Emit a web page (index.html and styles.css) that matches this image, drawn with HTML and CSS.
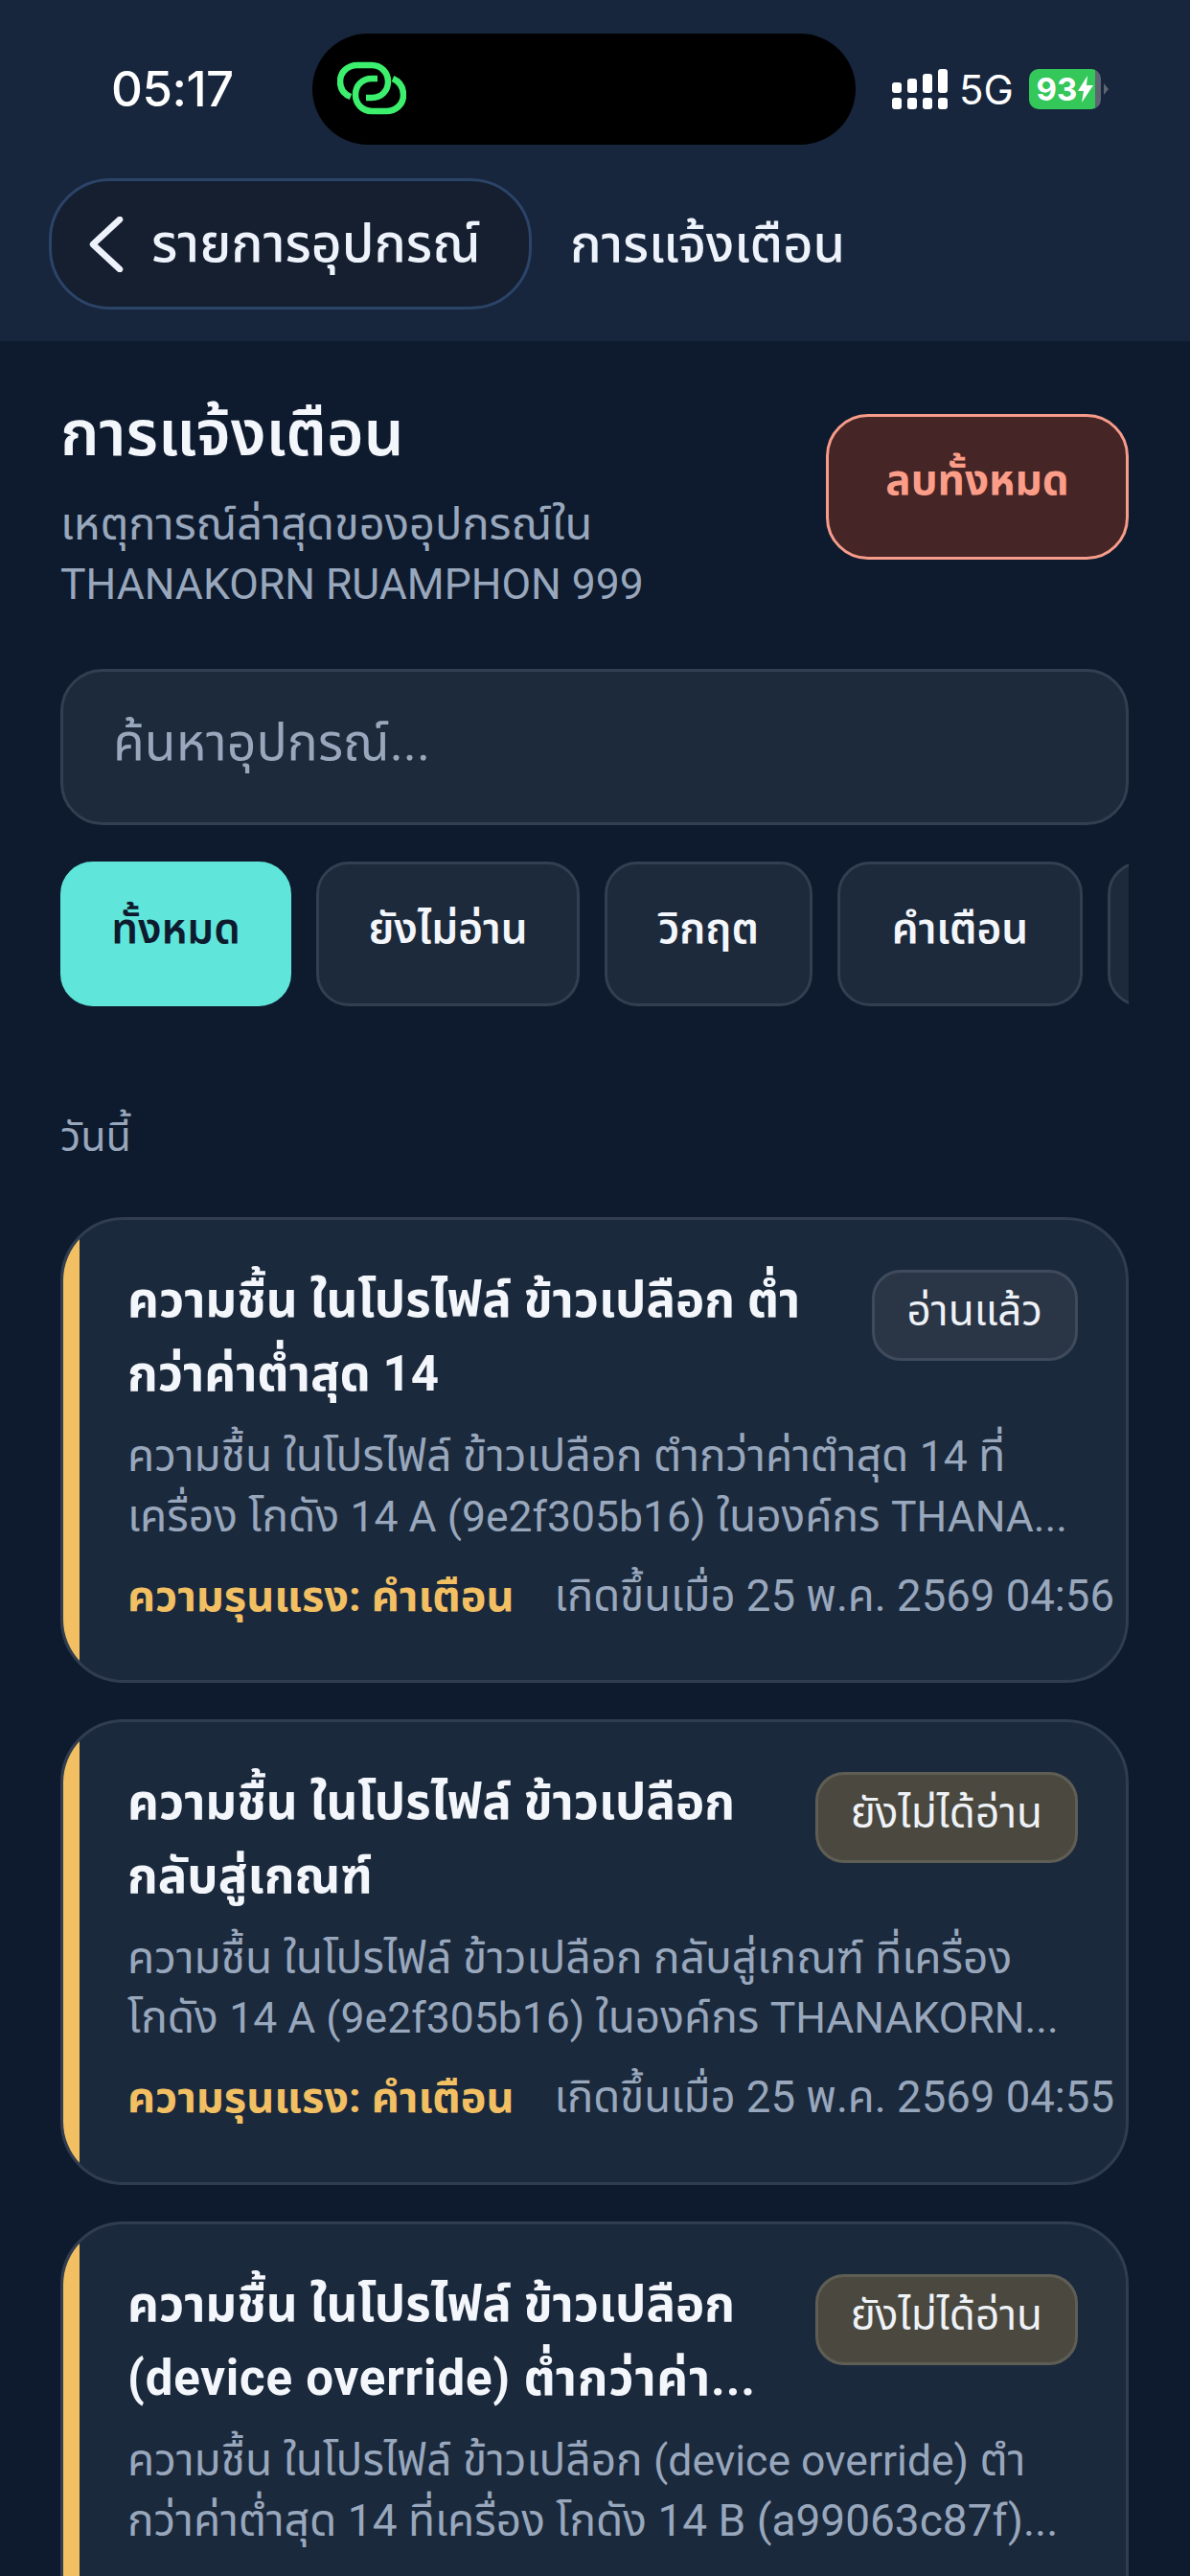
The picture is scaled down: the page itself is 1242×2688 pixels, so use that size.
FILE: index.html
```html
<!DOCTYPE html>
<html lang="th">
<head>
    <meta charset="UTF-8">
    <meta name="viewport" content="width=device-width, initial-scale=1.0">
    <title>การแจ้งเตือน</title>
    <link rel="stylesheet" href="styles.css">
</head>
<body>
<div class="screen">
    <header class="top">
        <div class="status">
            <span class="time">05:17</span>
            <div class="island">
                <svg class="link-icon" width="72" height="58" viewBox="0 0 72 58" fill="none" stroke="#3cf06e" stroke-width="6.5" stroke-linecap="butt">
                    <path d="M14 37C6 34 3 28 3 21C3 11 11 4 21 4H36C46 4 53 12 53 21C53 31 46 38 36 38H30"/>
                    <path d="M58 18C65 21 69 27 69 35C69 45 61 52 51 52H36C26 52 19 44 19 35C19 25 26 18 36 18H42"/>
                </svg>
            </div>
            <div class="indicators">
                <svg width="58" height="42" viewBox="0 0 58 42" fill="#fff">
                    <rect x="0" y="14" width="10" height="11" rx="3"/>
                    <rect x="16" y="10" width="10" height="15" rx="3"/>
                    <rect x="32" y="5" width="10" height="20" rx="3"/>
                    <rect x="48" y="0" width="10" height="25" rx="3"/>
                    <rect x="0" y="30" width="10" height="12" rx="3"/>
                    <rect x="16" y="30" width="10" height="12" rx="3"/>
                    <rect x="32" y="30" width="10" height="12" rx="3"/>
                    <rect x="48" y="30" width="10" height="12" rx="3"/>
                </svg>
                <span class="net">5G</span>
                <div class="battery">
                    <span class="level">93</span>
                    <svg class="bolt" width="16" height="28" viewBox="0 0 16 28" fill="#fff"><path d="M10 0L0 16H6L4 28L16 10H9Z"/></svg>
                </div>
                <span class="battery-tip"></span>
            </div>
        </div>
        <nav class="nav">
            <a class="back">
                <svg width="38" height="58" viewBox="0 0 38 58" fill="none" stroke="#eef3fb" stroke-width="6.5" stroke-linecap="round" stroke-linejoin="round"><path d="M33 3L5 29L33 55"/></svg>
                <span class="nav-text">รายการอุปกรณ์</span>
            </a>
            <span class="nav-text nav-title">การแจ้งเตือน</span>
        </nav>
    </header>

    <main class="content">
        <section class="intro">
            <div>
                <h1>การแจ้งเตือน</h1>
                <p>เหตุการณ์ล่าสุดของอุปกรณ์ใน<br><span class="en">THANAKORN RUAMPHON 999</span></p>
            </div>
            <button class="clear">ลบทั้งหมด</button>
        </section>

        <div class="search">ค้นหาอุปกรณ์...</div>

        <div class="chips">
            <span class="chip active">ทั้งหมด</span>
            <span class="chip">ยังไม่อ่าน</span>
            <span class="chip">วิกฤต</span>
            <span class="chip">คำเตือน</span>
            <span class="chip"></span>
        </div>

        <div class="day">วันนี้</div>

        <article class="card">
            <div class="card-head">
                <h3>ความชื้น ในโปรไฟล์ ข้าวเปลือก ต่ำ<br>กว่าค่าต่ำสุด 14</h3>
                <span class="pill">อ่านแล้ว</span>
            </div>
            <p class="desc">ความชื้น ในโปรไฟล์ ข้าวเปลือก ตำกว่าค่าตำสุด <span class="en">14</span> ที่<br>เครื่อง โกดัง <span class="en">14 A (9e2f305b16)</span> ในองค์กร <span class="en">THANA...</span></p>
            <div class="meta"><b>ความรุนแรง: คำเตือน</b><span>เกิดขึ้นเมื่อ 25 พ.ค. 2569 04:56</span></div>
        </article>

        <article class="card">
            <div class="card-head">
                <h3>ความชื้น ในโปรไฟล์ ข้าวเปลือก<br>กลับสู่เกณฑ์</h3>
                <span class="pill unread">ยังไม่ได้อ่าน</span>
            </div>
            <p class="desc">ความชื้น ในโปรไฟล์ ข้าวเปลือก กลับสู่เกณฑ์ ที่เครื่อง<br>โกดัง <span class="en">14 A (9e2f305b16)</span> ในองค์กร <span class="en">THANAKORN...</span></p>
            <div class="meta"><b>ความรุนแรง: คำเตือน</b><span>เกิดขึ้นเมื่อ 25 พ.ค. 2569 04:55</span></div>
        </article>

        <article class="card">
            <div class="card-head">
                <h3>ความชื้น ในโปรไฟล์ ข้าวเปลือก<br><span class="wide">(device override) ต่ำกว่าค่า...</span></h3>
                <span class="pill unread">ยังไม่ได้อ่าน</span>
            </div>
            <p class="desc">ความชื้น ในโปรไฟล์ ข้าวเปลือก <span class="en">(device override)</span> ตำ<br>กว่าค่าต่ำสุด 14 ที่เครื่อง โกดัง 14 B (a99063c87f)...</p>
        </article>
    </main>
</div>
</body>
</html>
```
FILE: styles.css
```css
* {
    box-sizing: border-box;
}
html, body {
    margin: 0;
    padding: 0;
}
body {
    width: 1242px;
    height: 2688px;
    overflow: hidden;
    background: #0e1b2e;
    font-family: Roboto, "Noto Sans Thai", "Noto Sans", sans-serif;
    color: #f3f6fb;
}
.screen {
    height: 2688px;
    overflow: hidden;
}
.en {
    font-size: 44.5px;
}
.wide {
    letter-spacing: 0.8px;
}
.top {
    height: 356px;
    padding-top: 35px;
    background: #17263d;
}
.status {
    display: flex;
    align-items: center;
    height: 116px;
}
.time {
    width: 326px;
    padding-left: 116px;
    padding-bottom: 2px;
    font-family: Inter, sans-serif;
    font-size: 51px;
    font-weight: 500;
    letter-spacing: -0.5px;
    color: #fff;
}
.island {
    display: flex;
    align-items: center;
    width: 567px;
    height: 116px;
    padding-left: 26px;
    border-radius: 58px;
    background: #000;
}
.indicators {
    display: flex;
    align-items: center;
    padding-left: 38px;
}
.net {
    margin-left: 12px;
    font-family: Inter, sans-serif;
    font-size: 42px;
    color: #fff;
}
.battery {
    display: flex;
    align-items: center;
    justify-content: center;
    gap: 1px;
    width: 75px;
    height: 42px;
    margin-left: 16px;
    border-radius: 10px;
    background: linear-gradient(to right, #34c759 92%, #5d6472 92%);
}
.level {
    font-family: Inter, sans-serif;
    font-size: 33px;
    font-weight: 700;
    line-height: 1;
    color: #fff;
}
.battery-tip {
    width: 0;
    height: 0;
    margin-left: 3px;
    border-top: 6px solid transparent;
    border-bottom: 6px solid transparent;
    border-left: 5px solid #5d6472;
}
.nav {
    display: flex;
    align-items: center;
    gap: 40px;
    margin-top: 35px;
    padding-left: 51px;
}
.back {
    display: flex;
    align-items: center;
    gap: 28px;
    width: 504px;
    height: 137px;
    padding-left: 38px;
    border: 3px solid #2b4468;
    border-radius: 64px;
    background: #151f30;
    font-size: 55px;
    font-weight: 500;
    color: #eef3fb;
}
.nav-text {
    padding-top: 4px;
}
.nav-title {
    font-size: 54px;
    font-weight: 500;
    color: #eef3fb;
}
.content {
    padding: 0 64px 0 63px;
}
.intro {
    display: flex;
    justify-content: space-between;
    align-items: flex-start;
    padding-top: 59px;
}
h1 {
    margin: 0;
    font-size: 66px;
    font-weight: 600;
    line-height: 76px;
}
.intro p {
    margin: 25px 0 0;
    font-size: 47px;
    line-height: 62px;
    color: #98a7bc;
}
.clear {
    width: 316px;
    height: 152px;
    margin-top: 17px;
    padding: 0 0 12px;
    border: 3px solid #f79c8a;
    border-radius: 44px;
    background: #452525;
    font-family: inherit;
    font-size: 44px;
    font-weight: 700;
    color: #fb9d88;
}
.search {
    display: flex;
    align-items: center;
    height: 163px;
    margin-top: 57px;
    padding: 0 0 6px 52px;
    border: 3px solid #323f51;
    border-radius: 44px;
    background: #1d2a3b;
    font-size: 53.5px;
    color: #98a7bc;
}
.chips {
    display: grid;
    grid-template-columns: 241px 275px 217px 256px 200px;
    gap: 26px;
    margin-top: 38px;
    overflow: hidden;
}
.chip {
    display: flex;
    align-items: center;
    justify-content: center;
    height: 151px;
    padding-bottom: 8px;
    border: 3px solid #323f51;
    border-radius: 34px;
    background: #1d2a3b;
    font-size: 44px;
    font-weight: 600;
    color: #f3f6fb;
}
.chip.active {
    border-color: #5fe5d9;
    background: #5fe5d9;
    color: #0e1b2e;
}
.day {
    margin-top: 106px;
    height: 60px;
    font-size: 43px;
    line-height: 60px;
    color: #98a7bc;
}
.card {
    position: relative;
    height: 486px;
    margin-top: 54px;
    padding: 45px 0 0 67px;
    overflow: hidden;
    border: 3px solid #303d50;
    border-radius: 66px;
    background: #1b293c;
}
.card::before {
    content: "";
    position: absolute;
    top: 0;
    bottom: 0;
    left: 0;
    width: 17px;
    background: #f2c063;
}
.card + .card {
    margin-top: 38px;
}
.card-head {
    display: flex;
    justify-content: space-between;
    align-items: flex-start;
    padding-right: 50px;
}
h3 {
    margin: 0;
    font-size: 51px;
    font-weight: 700;
    line-height: 77px;
    white-space: nowrap;
}
.pill {
    display: flex;
    align-items: center;
    flex: none;
    height: 95px;
    margin-top: 7px;
    padding: 0 34px 6px;
    border: 3px solid #3f4b5c;
    border-radius: 30px;
    background: #2a3546;
    font-size: 44px;
    color: #eef2f7;
}
.pill.unread {
    border-color: #5f5e55;
    background: #4a483f;
}
.desc {
    margin: 16px 0 0;
    font-size: 46px;
    line-height: 62px;
    color: #98a7bc;
    white-space: nowrap;
}
.meta {
    display: flex;
    align-items: baseline;
    gap: 42px;
    margin-top: 21px;
    font-size: 45px;
    line-height: 62px;
    white-space: nowrap;
}
.meta b {
    font-weight: 700;
    color: #f2c063;
}
.meta span {
    font-size: 45.5px;
    color: #98a7bc;
}
```
